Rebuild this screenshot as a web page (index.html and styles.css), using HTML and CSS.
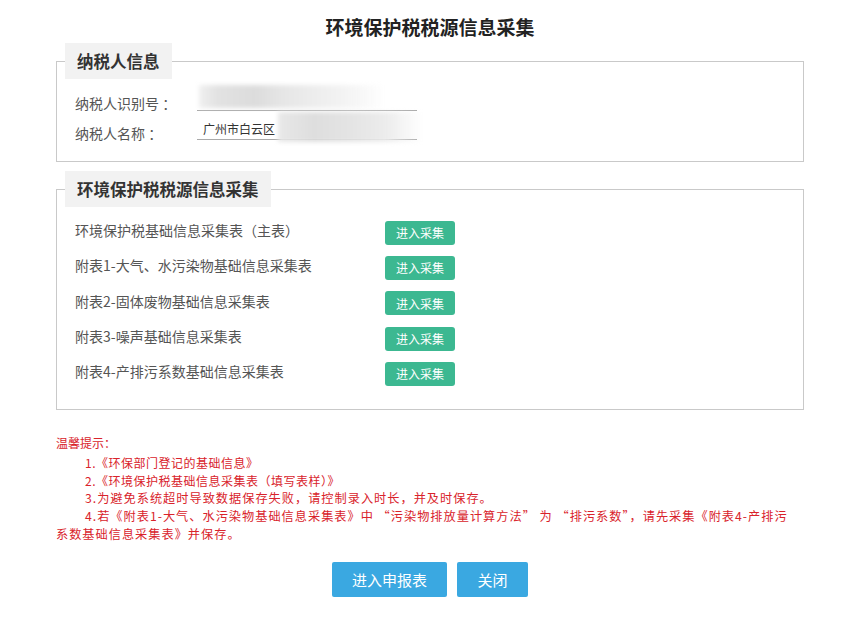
FILE: index.html
```html
<!DOCTYPE html>
<html lang="zh-CN">
<head>
<meta charset="utf-8">
<title>环境保护税税源信息采集</title>
<link rel="stylesheet" href="styles.css">
</head>
<body>
<div class="page">
	<h1 class="title">环境保护税税源信息采集</h1>

	<fieldset class="box box-info">
		<legend>纳税人信息</legend>
		<div class="field-row">
			<span class="field-label">纳税人识别号 ：</span>
			<span class="field-value"><span class="mask mask-id"></span></span>
		</div>
		<div class="field-row">
			<span class="field-label">纳税人名称 ：</span>
			<span class="field-value">广州市白云区<span class="mask mask-name"></span></span>
		</div>
	</fieldset>

	<fieldset class="box box-forms">
		<legend>环境保护税税源信息采集</legend>
		<div class="form-row">
			<span class="form-name">环境保护税基础信息采集表（主表）</span>
			<button class="btn-collect">进入采集</button>
		</div>
		<div class="form-row">
			<span class="form-name">附表1-大气、水污染物基础信息采集表</span>
			<button class="btn-collect">进入采集</button>
		</div>
		<div class="form-row">
			<span class="form-name">附表2-固体废物基础信息采集表</span>
			<button class="btn-collect">进入采集</button>
		</div>
		<div class="form-row">
			<span class="form-name">附表3-噪声基础信息采集表</span>
			<button class="btn-collect">进入采集</button>
		</div>
		<div class="form-row">
			<span class="form-name">附表4-产排污系数基础信息采集表</span>
			<button class="btn-collect">进入采集</button>
		</div>
	</fieldset>

	<div class="notes">
		<p class="notes-title">温馨提示：</p>
		<p class="note note-small">1.《环保部门登记的基础信息》</p>
		<p class="note note-small">2.《环境保护税基础信息采集表（填写表样）》</p>
		<p class="note">3.为避免系统超时导致数据保存失败，请控制录入时长，并及时保存。</p>
		<p class="note">4.若《附表1-大气、水污染物基础信息采集表》中 “污染物排放量计算方法” 为 “排污系数”，请先采集《附表4-产排污系数基础信息采集表》并保存。</p>
	</div>

	<div class="actions">
		<button class="btn-main">进入申报表</button>
		<button class="btn-main btn-close">关闭</button>
	</div>
</div>
</body>
</html>
```

FILE: styles.css
```css
body{
	margin: 0;
	background-color: #fff;
	font-family: "Noto Sans CJK SC", "Noto Sans", sans-serif;
	color: #555;
}
.page{
	width: 748px;
	margin-left: 56px;
}
.title{
	margin: 0 0 3px 0;
	padding-top: 14px;
	font-size: 19px;
	line-height: 26px;
	font-weight: bold;
	color: #222;
	text-align: center;
}
.box{
	margin: 0;
	padding: 11px 18px 13px 18px;
	border: 1px solid #c9c9c9;
	min-width: 0;
}
.box legend{
	margin-left: -10px;
	padding: 0 12px;
	background-color: #f2f2f2;
	font-size: 16.5px;
	line-height: 36px;
	font-weight: bold;
	color: #333;
}
.box-forms{
	margin-top: 9px;
	padding: 8px 18px 18px 18px;
}
.field-row{
	display: flex;
	align-items: flex-start;
	height: 29px;
}
.field-label{
	width: 122px;
	font-size: 14px;
	line-height: 29px;
	margin-top: -1px;
	white-space: nowrap;
}
.field-row + .field-row .field-label{
	margin-top: 0;
}
.field-value{
	position: relative;
	width: 214px;
	height: 20px;
	padding-left: 6px;
	border-bottom: 1px solid #aaa;
	font-size: 12px;
	line-height: 20px;
	color: #333;
}
.mask{
	position: absolute;
	filter: blur(2px);
}
.mask-id{
	left: 2px;
	top: -5px;
	width: 186px;
	height: 23px;
	background: linear-gradient(90deg, #f0f0f0 0, #e2e2e2 10%, #dcdcdc 30%, #e6e6e6 45%, #ededed 62%, #f4f4f4 80%, rgba(255,255,255,0) 100%);
}
.mask-name{
	left: 81px;
	top: -7px;
	width: 144px;
	height: 30px;
	background: linear-gradient(90deg, #e8e8e8 0, #dedede 25%, #e4e4e4 50%, #ececec 75%, rgba(255,255,255,0) 100%);
}
.form-row{
	display: flex;
	align-items: center;
	height: 35.3px;
}
.form-name{
	width: 310px;
	font-size: 14px;
	line-height: 20px;
	padding-bottom: 5px;
}
.btn-collect{
	width: 70px;
	height: 24px;
	padding: 0;
	border: 0;
	border-radius: 3px;
	background-color: #3cb891;
	color: #fff;
	font-family: inherit;
	font-size: 12px;
	cursor: pointer;
}
.notes{
	margin-top: 22px;
	color: #d9232b;
}
.notes p{
	margin: 0;
}
.notes-title{
	font-size: 12px;
	line-height: 22px;
}
.note{
	padding-right: 8px;
	font-size: 12.2px;
	letter-spacing: 1px;
	line-height: 18px;
	text-indent: 29px;
}
.note-small{
	font-size: 12px;
	letter-spacing: 0.5px;
	line-height: 17.5px;
}
.actions{
	display: flex;
	justify-content: center;
	gap: 10px;
	margin-top: 19px;
}
.btn-main{
	width: 115px;
	height: 35px;
	padding: 0;
	border: 0;
	border-radius: 2px;
	background-color: #3aa8e1;
	color: #fff;
	font-family: inherit;
	font-size: 15px;
	cursor: pointer;
}
.btn-close{
	width: 71px;
}
```
